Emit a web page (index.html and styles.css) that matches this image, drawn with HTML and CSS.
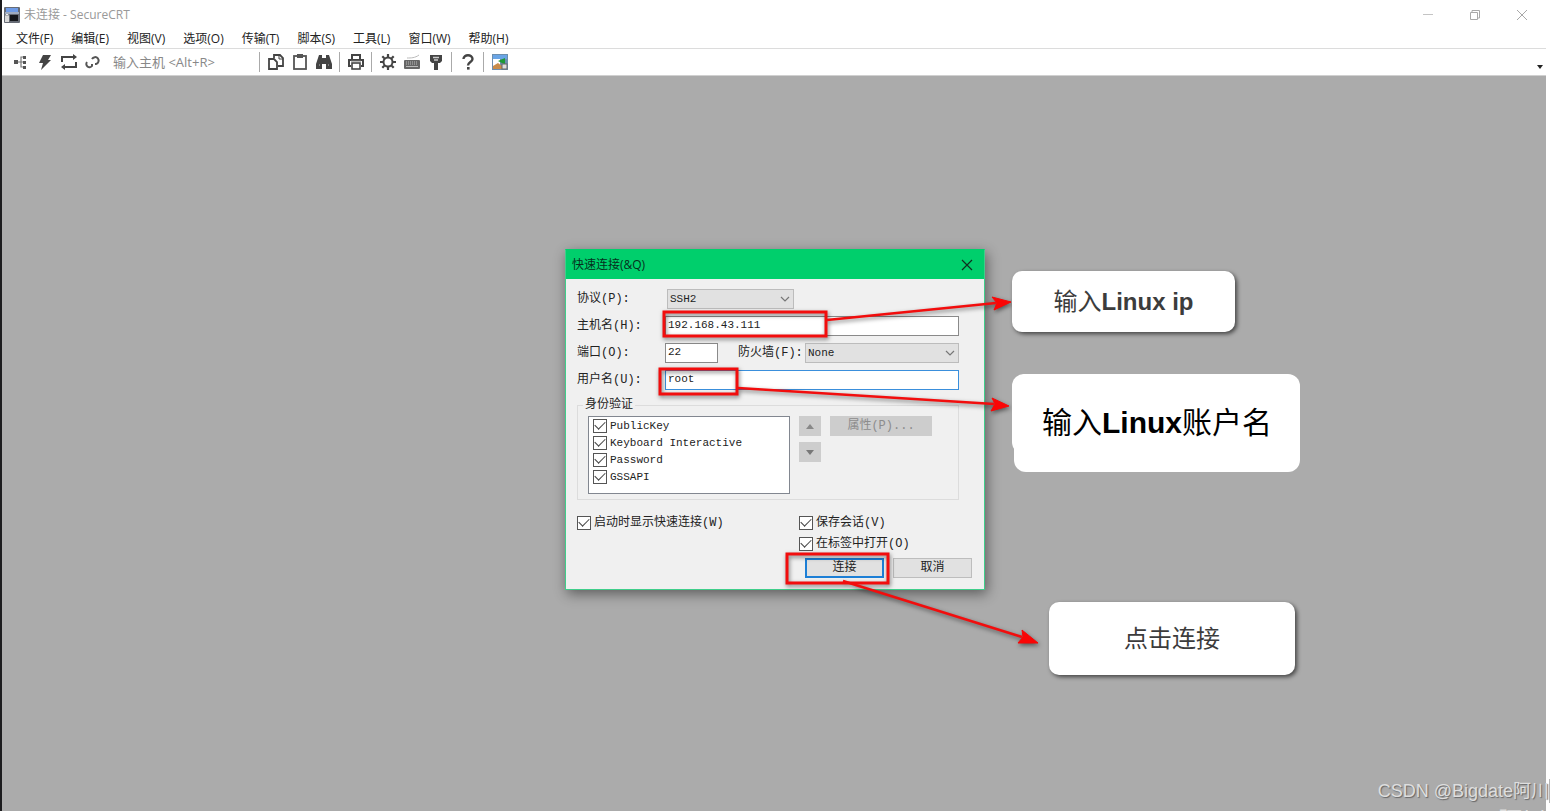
FILE: index.html
```html
<!DOCTYPE html>
<html lang="zh-CN">
<head>
<meta charset="utf-8">
<title>未连接 - SecureCRT</title>
<link rel="stylesheet" href="styles.css">
</head>
<body>
<div class="app">
  <header class="titlebar">
    <svg class="app-icon" width="16" height="16" viewBox="0 0 16 16"><rect x="0" y="0" width="16" height="16" rx="1" fill="#666b75"/><rect x="2" y="1" width="12" height="4" fill="#6f9be6"/><rect x="1" y="5" width="14" height="2" fill="#9fabc0"/><rect x="6" y="8" width="8" height="6" fill="#15171c"/><path d="M1 9h4v6H1z" fill="#d8d8d8"/><path d="M2 9V7.500h2V9" fill="none" stroke="#eee"/></svg>
    <h1 class="title">未连接 - SecureCRT</h1>
    <div class="window-controls">
      <button class="wc" aria-label="最小化"><svg width="12" height="12"><path d="M1 5.500h10" stroke="#c4c4c4" fill="none"/></svg></button>
      <button class="wc" aria-label="还原"><svg width="12" height="12"><path d="M1.500 3.500h7v7h-7zM3 3V1.500h7.500V9H9" stroke="#a8a8a8" fill="none"/></svg></button>
      <button class="wc" aria-label="关闭"><svg width="12" height="12"><path d="M1 1l10 10M11 1L1 11" stroke="#a8a8a8" fill="none"/></svg></button>
    </div>
  </header>
  <nav class="menubar">
    <button>文件(F)</button><button>编辑(E)</button><button>视图(V)</button><button>选项(O)</button><button>传输(T)</button><button>脚本(S)</button><button>工具(L)</button><button>窗口(W)</button><button>帮助(H)</button>
  </nav>
  <div class="toolbar">
    <button class="tool" aria-label="会话管理器"><svg width="18" height="18" viewBox="0 0 18 18"><path d="M4 9h7M13 4H9v10h4" fill="none" stroke="#777" stroke-width="1.200"/><path d="M2 7h4v4H2zM11 3h3v3h-3zM11 8h3v3h-3zM11 13h3v3h-3z" fill="#555"/></svg></button>
    <button class="tool" aria-label="快速连接"><svg width="18" height="18" viewBox="0 0 18 18"><path d="M7 2h8l-3 5h3L5 17l2-7H3z" fill="#444"/></svg></button>
    <button class="tool" aria-label="重新连接"><svg width="18" height="18" viewBox="0 0 18 18"><path d="M2 9V4h12M16 9v5H4" fill="none" stroke="#444" stroke-width="2"/><path d="M13 1l4 3-4 3zM5 11l-4 3 4 3z" fill="#444"/></svg></button>
    <button class="tool" aria-label="断开"><svg width="18" height="18" viewBox="0 0 18 18"><path d="M3 9a3 3 0 1 0 5 4l0-2M8 6a3.500 3.500 0 1 1 4 5h-1" fill="none" stroke="#555" stroke-width="2"/></svg></button>
    <input class="host-input" type="text" aria-label="输入主机" placeholder="输入主机 &lt;Alt+R&gt;">
    <span class="sep"></span>
    <button class="tool" aria-label="复制"><svg width="18" height="18" viewBox="0 0 18 18"><path d="M7 5V2h6l3 3v8h-5M2 6h5l3 3v7H2z" fill="#fff" stroke="#444" stroke-width="1.800"/><path d="M12 2v4h4" fill="none" stroke="#444"/></svg></button>
    <button class="tool" aria-label="粘贴"><svg width="18" height="18" viewBox="0 0 18 18"><rect x="3" y="3" width="12" height="13" fill="#fff" stroke="#555" stroke-width="1.800"/><path d="M6 1h6v4H6z" fill="#555"/></svg></button>
    <button class="tool" aria-label="查找"><svg width="18" height="18" viewBox="0 0 18 18"><path d="M4 2h3v3h4V2h3l3 9v5h-6v-5H7v5H1v-5z" fill="#444"/><path d="M4 12h1M13 12h1" stroke="#bbb"/></svg></button>
    <span class="sep"></span>
    <button class="tool" aria-label="打印"><svg width="18" height="18" viewBox="0 0 18 18"><path d="M5 6V2h8v4M4 13H2V7h14v6h-2" fill="none" stroke="#444" stroke-width="2"/><rect x="5" y="10" width="8" height="6" fill="#fff" stroke="#444" stroke-width="1.600"/><path d="M4 8h10" stroke="#777"/></svg></button>
    <span class="sep"></span>
    <button class="tool" aria-label="选项"><svg width="18" height="18" viewBox="0 0 18 18"><circle cx="9" cy="9" r="4.500" fill="none" stroke="#444" stroke-width="2"/><path d="M9 1v3M9 14v3M1 9h3M14 9h3M3.300 3.300l2 2M12.700 12.700l2 2M14.700 3.300l-2 2M5.300 12.700l-2 2" stroke="#444" stroke-width="2.200"/></svg></button>
    <button class="tool" aria-label="键映射"><svg width="18" height="18" viewBox="0 0 18 18"><path d="M4 5c4 0 8 0 12-3" fill="none" stroke="#bbb"/><rect x="1" y="7" width="16" height="9" rx="1" fill="#666"/><path d="M3 9h12M3 11h12" stroke="#bbb" stroke-dasharray="1 1"/><path d="M3 13.500h12" stroke="#bbb"/></svg></button>
    <button class="tool" aria-label="公钥"><svg width="18" height="18" viewBox="0 0 18 18"><path d="M3 2h12v6l-2 2h-2v7H7v-7H5L3 8z" fill="#444"/><path d="M6 4.500h6M7 7h4" stroke="#ccc" stroke-width="1.300"/></svg></button>
    <span class="sep"></span>
    <button class="tool" aria-label="帮助"><svg width="18" height="18" viewBox="0 0 18 18"><path d="M4.500 6c0-5 9-5 9 0 0 3-4.500 3-4.500 6.500" fill="none" stroke="#444" stroke-width="2.400"/><rect x="8" y="14" width="2.600" height="2.600" fill="#444"/></svg></button>
    <span class="sep"></span>
    <button class="tool" aria-label="SecureFX"><svg width="18" height="18" viewBox="0 0 18 18"><rect x="1" y="1" width="16" height="16" fill="#6d8fae"/><rect x="2" y="2" width="14" height="4" fill="#6aa5e6"/><path d="M2 6h7v7H2z" fill="#fff"/><path d="M2 13l5-3 4 3v3H2z" fill="#c98c49"/><path d="M7 8l7-3v6l-3-1z" fill="#1c9a36"/><rect x="11" y="11" width="5" height="5" fill="#ddd" stroke="#666"/></svg></button>
    <button class="overflow" aria-label="更多"><svg width="6" height="4"><path d="M0 0h6L3 4z" fill="#222"/></svg></button>
  </div>

  <main class="workspace">
    <section class="dialog" role="dialog" aria-labelledby="dlg-title">
      <header class="dialog-head">
        <h2 id="dlg-title">快速连接(&amp;Q)</h2>
        <button class="dialog-close" aria-label="关闭"><svg width="12" height="12"><path d="M1 1l10 10M11 1L1 11" stroke="#10301f" stroke-width="1.200" fill="none"/></svg></button>
      </header>
      <form class="dialog-body">
        <div class="fields">
          <div class="row">
            <label for="proto">协议(P):</label>
            <span class="select proto"><select id="proto"><option>SSH2</option></select><svg width="10" height="6"><path d="M1 1l4 4 4-4" fill="none" stroke="#777" stroke-width="1.200"/></svg></span>
          </div>
          <div class="row">
            <label for="host">主机名(H):</label>
            <input class="text" id="host" type="text" value="192.168.43.111">
          </div>
          <div class="row">
            <label for="port">端口(O):</label>
            <input class="text port" id="port" type="text" value="22">
            <label class="fw-label" for="fw">防火墙(F):</label>
            <span class="select fw"><select id="fw"><option>None</option></select><svg width="10" height="6"><path d="M1 1l4 4 4-4" fill="none" stroke="#777" stroke-width="1.200"/></svg></span>
          </div>
          <div class="row">
            <label for="user">用户名(U):</label>
            <input class="text active" id="user" type="text" value="root">
          </div>
        </div>
        <fieldset class="auth">
          <legend>身份验证</legend>
          <div class="auth-content">
            <div class="auth-list">
              <label><input type="checkbox" checked>PublicKey</label>
              <label><input type="checkbox" checked>Keyboard Interactive</label>
              <label><input type="checkbox" checked>Password</label>
              <label><input type="checkbox" checked>GSSAPI</label>
            </div>
            <div class="order">
              <button type="button" disabled aria-label="上移"><svg width="8" height="5"><path d="M0 5h8L4 0z" fill="#888"/></svg></button>
              <button type="button" disabled aria-label="下移"><svg width="8" height="5"><path d="M0 0h8L4 5z" fill="#777"/></svg></button>
            </div>
            <button class="props" type="button" disabled>属性(P)...</button>
          </div>
        </fieldset>
        <div class="options">
          <label><input type="checkbox" checked>启动时显示快速连接(W)</label>
          <div class="options-right">
            <label><input type="checkbox" checked>保存会话(V)</label>
            <label><input type="checkbox" checked>在标签中打开(O)</label>
          </div>
        </div>
        <div class="actions">
          <button class="btn primary" type="button">连接</button>
          <button class="btn" type="button">取消</button>
        </div>
      </form>
    </section>

    <svg class="marks" aria-hidden="true">
      <g transform="translate(-2 -76)" fill="none" stroke="#f20d0d" stroke-width="3">
        <rect x="664" y="312" width="162" height="24"/>
        <rect x="660" y="369" width="77" height="25"/>
        <rect x="787" y="554" width="101" height="29"/>
        <path d="M827 320L996 303M738 388L994 404M843 581L1022 637" stroke-width="2.500"/>
        <path d="M1011 302L994 310L997 303L992 297zM1009 406L991 411L995 404L992 398zM1038 643L1018 643L1023 637L1022 630z" fill="#fa0505" stroke="#fa0505" stroke-width="1"/>
      </g>
    </svg>

    <div class="callout c-ip"><span>输入<b>Linux ip</b></span></div>
    <div class="callout c-user"><span>输入<b>Linux</b>账户名</span></div>
    <div class="callout c-go"><span>点击连接</span></div>
  </main>
  <div class="watermark">CSDN @Bigdate阿川</div>
  <div class="watermark lower" aria-hidden="true">阿川</div>
</div>
</body>
</html>
```
FILE: styles.css
```css
* { box-sizing: border-box; }

body {
  margin: 0;
  background: #fff;
  font: 12px/16px "Open Sans", "Noto Sans CJK SC", sans-serif;
  color: #222;
}

button, input, select { font: inherit; color: inherit; margin: 0; }
button { border: 0; padding: 0; background: none; }
svg { display: block; }

.app {
  position: relative;
  display: flex;
  flex-direction: column;
  height: 100vh;
  overflow: hidden;
  border-left: 2px solid #1c1c1e;
  padding-right: 19px;
}

/* Window chrome */
.titlebar {
  display: flex;
  align-items: center;
  height: 29px;
  padding: 0 18px 0 2px;
}
.title {
  flex: 1;
  margin: 0 0 0 4px;
  font-size: 12px;
  font-weight: 400;
  color: #999;
}
.window-controls { display: flex; gap: 35px; }
.wc { width: 12px; }

.menubar {
  display: flex;
  gap: 18px;
  height: 20px;
  padding: 0 14px;
  border-bottom: 1px solid #dcdcdc;
  align-items: center;
}

.toolbar {
  display: flex;
  align-items: center;
  height: 27px;
  padding: 0 3px 0 7px;
  border-bottom: 1px solid #d0d0d0;
}
.tool {
  display: flex;
  justify-content: center;
  width: 24px;
}
.host-input {
  width: 151px;
  padding: 0 0 0 8px;
  border: 0;
  outline: 0;
  font-size: 13px;
}
.host-input::placeholder { color: #888; }
.sep {
  width: 1px;
  height: 20px;
  margin: 0 4px 0 3px;
  background: #aaa;
}
.overflow { margin: 10px 0 0 auto; }

/* Session area */
.workspace {
  position: relative;
  flex: 1;
  background: #ababab;
}

.dialog {
  position: absolute;
  left: 563px;
  top: 173px;
  width: 420px;
  border: 1px solid #3fce8a;
  border-top-color: #00cf6c;
  background: #f0f0f0;
  box-shadow: 2px 4px 12px rgba(0, 0, 0, 0.45);
  font-family: "Liberation Mono", "Noto Sans CJK SC", monospace;
}
.dialog-head {
  display: flex;
  align-items: center;
  justify-content: space-between;
  height: 29px;
  padding: 0 11px 0 6px;
  background: #00cf6c;
}
.dialog-head h2 {
  margin: 0;
  font: 12px/16px "Open Sans", "Noto Sans CJK SC", sans-serif;
  color: #06301c;
}
.dialog-body { padding: 10px 12px 11px 11px; }

.fields {
  display: flex;
  flex-direction: column;
  gap: 7px;
  margin-right: 13px;
}
.row { display: flex; align-items: center; height: 20px; }
.row label { width: 88px; white-space: nowrap; }
.row .fw-label { width: 67px; margin-left: 20px; }

.text {
  flex: 1;
  min-width: 0;
  height: 20px;
  padding: 0 2px 2px;
  border: 1px solid #8a8a8a;
  background: #fff;
  font-size: 11px;
}
.text.port { flex: none; width: 53px; }
.text.active { border-color: #3a8fdc; outline: 0; }

.select { position: relative; height: 20px; }
.select.proto { width: 127px; margin-left: 2px; }
.select.fw { flex: 1; }
.select select {
  appearance: none;
  width: 100%;
  height: 20px;
  padding: 0 2px;
  border: 1px solid #bcbcbc;
  border-radius: 0;
  background: #e1e1e1;
  font-size: 11px;
}
.select svg { position: absolute; right: 4px; top: 7px; pointer-events: none; }

.auth {
  min-width: 0;
  margin: 6px 13px 0 0;
  padding: 2px 10px 5px;
  border: 1px solid #dcdcdc;
}
.auth legend { padding: 0 2px; margin-left: -5px; line-height: 18px; }
.auth-content { display: flex; align-items: flex-start; }
.auth-list {
  width: 202px;
  height: 78px;
  padding: 0 4px;
  border: 1px solid #828790;
  background: #fff;
  font-size: 11px;
}
.auth-list label { height: 17px; }
.auth-list label, .options label {
  display: flex;
  align-items: center;
  gap: 3px;
  white-space: nowrap;
}

input[type="checkbox"] {
  appearance: none;
  display: grid;
  place-items: center;
  width: 14px;
  height: 14px;
  border: 1px solid #555;
  background: #fff;
}
input[type="checkbox"]:checked::after {
  content: "";
  width: 9px;
  height: 5px;
  margin-bottom: 3px;
  border: solid #444;
  border-width: 0 0 1px 1px;
  transform: rotate(-45deg);
}

.order { display: grid; gap: 6px; margin: 0 9px; }
.order button, .props { height: 20px; background: #cdcdcd; color: #8c8c8c; }
.order button { display: grid; place-items: center; width: 22px; }
.props { width: 102px; }

.options { display: flex; margin-top: 12px; }
.options > label { width: 222px; height: 21px; }
.options-right label { height: 21px; }

.actions {
  display: flex;
  justify-content: flex-end;
  gap: 9px;
  margin-top: 4px;
}
.btn {
  width: 79px;
  height: 20px;
  border: 1px solid #bdbdbd;
  background: #e1e1e1;
}
.btn.primary { border: 2px solid #1d7fd6; }

/* Annotations over the session area */
.marks {
  position: absolute;
  left: 0;
  top: 0;
  width: 100%;
  height: 100%;
  filter: drop-shadow(1px 2px 2px rgba(0, 0, 0, 0.5));
  pointer-events: none;
}
.callout {
  position: absolute;
  display: grid;
  place-items: center;
  border-radius: 10px;
  background: #fff;
  box-shadow: 2px 2px 4px rgba(0, 0, 0, 0.6);
  font: 24px/32px "Liberation Sans", "Noto Sans CJK SC", sans-serif;
  color: #3c3c3c;
  white-space: nowrap;
}
.c-ip { left: 1010px; top: 195px; width: 223px; height: 61px; }
.c-user {
  isolation: isolate;
  left: 1012px;
  top: 298px;
  width: 286px;
  height: 98px;
  border-radius: 12px;
  box-shadow: none;
  font-size: 30px;
  line-height: 40px;
  color: #000;
}
.c-user::before {
  content: "";
  position: absolute;
  z-index: -1;
  left: -2px;
  top: 0;
  width: 40px;
  height: 80px;
  border-radius: 12px;
  background: #fff;
}
.c-go { left: 1047px; top: 526px; width: 246px; height: 73px; }

.watermark {
  position: absolute;
  right: 15px;
  bottom: 8px;
  border-right: 1px solid #b5b5b5;
  font: 18px/24px "Liberation Sans", "Noto Sans CJK SC", sans-serif;
  color: #dedede;
  text-shadow: 1px 1px 1px #666;
}
.watermark.lower { right: 19px; bottom: -22px; border: 0; font-size: 24px; }
```
